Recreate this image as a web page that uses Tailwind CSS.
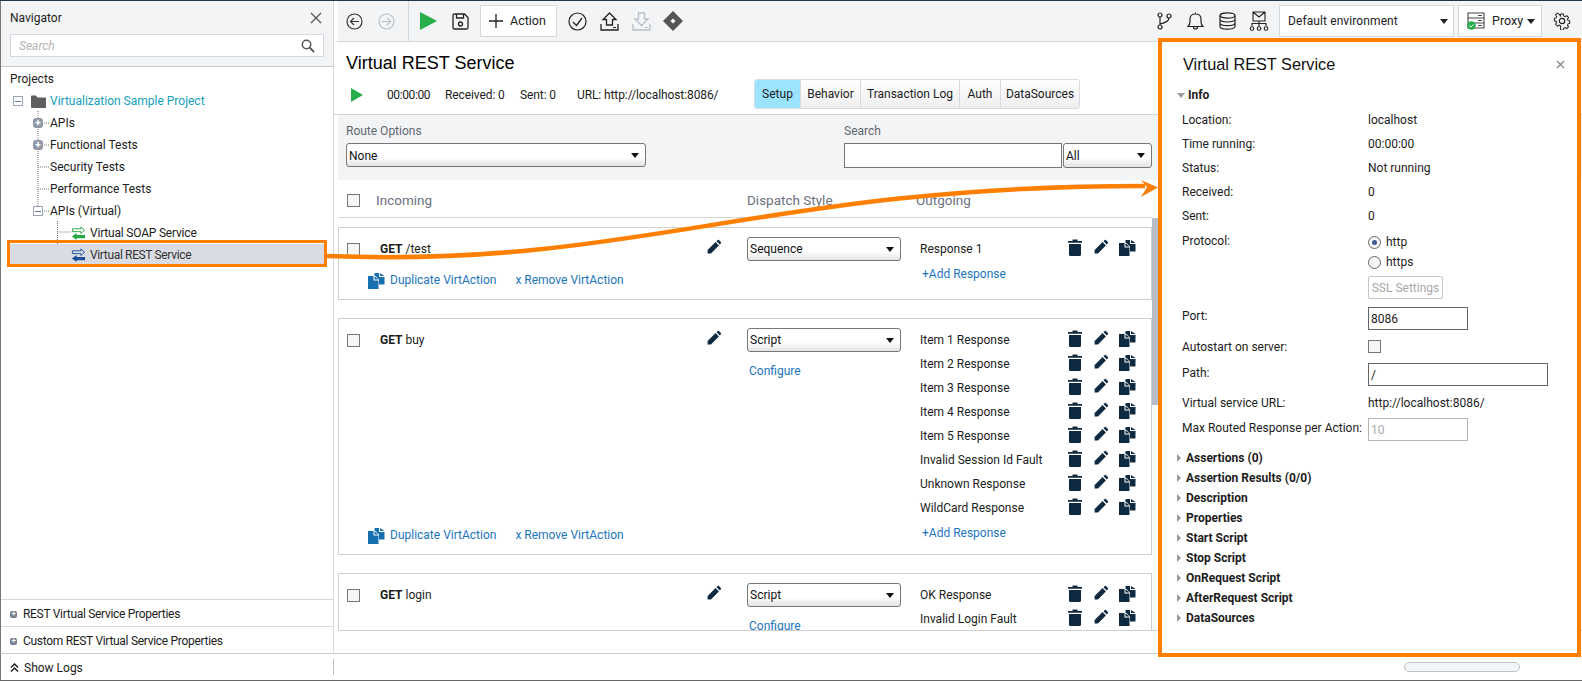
<!DOCTYPE html>
<html>
<head>
  <meta charset="UTF-8">
  <title>Virtual REST Service</title>
  <script src="https://cdn.jsdelivr.net/npm/@tailwindcss/browser@4"></script>
</head>
<body class="bg-white">
<svg class="hidden">
  <symbol id="pencil" viewBox="0 0 20 20"><path fill="currentColor" d="M2 18v-4.200L12 3.900l4.100 4.100L6.200 18z M13.200 2.800 14.600 1.400q.8-.7 1.600 0l2.400 2.400q.7.8 0 1.600L17.200 6.800z"/></symbol>
  <symbol id="trash" viewBox="0 0 14 17"><path fill="currentColor" d="M4.500 .5h5V2H14v1.800H0V2h4.500z M1 5h12v10.500q0 1.500-1.500 1.500h-9Q1 17 1 15.500z"/></symbol>
  <symbol id="copy" viewBox="0 0 17 17"><path fill="currentColor" d="M6.500 1H11v4h5.500v7.500H11V7.500L7.500 4H6.500z M12 1l4.500 3H12z M0 4h5.500v4.500H10.500V17H0z M6.500 4.200l4 3.300h-4z"/></symbol>
  <symbol id="swap" viewBox="0 0 16 16"><path fill="none" stroke="currentColor" stroke-width="1" d="M1.500 3h9V1l4 3.500-4 3.500V6h-9z"/><path fill="currentColor" d="M15 9.500H6V7.500L1 11.200l5 3.800v-2h9z"/></symbol>
</svg>

<div class="relative flex h-[681px] w-[1582px] flex-col overflow-hidden border-t border-b border-t-[#1c3a4b] border-b-[#666] font-['Roboto',sans-serif] text-[12px] text-[#1c1c1c]">
  <div class="flex h-[652px]">

    <!-- navigator -->
    <aside class="flex w-[334px] flex-col border-l border-r border-l-[#777] border-r-[#d5d8dc]">
      <div class="h-[66px] border-b border-[#c4c9d2] bg-[#f3f4f6] px-[9px]">
        <div class="flex h-[33px] items-center justify-between pr-[2px]">
          <span>Navigator</span>
          <svg class="h-[12px] w-[12px] text-[#555]" viewBox="0 0 12 12"><path d="M1 1l10 10M11 1 1 11" stroke="currentColor" stroke-width="1.300"/></svg>
        </div>
        <div class="flex h-[23px] w-[314px] items-center justify-between border border-[#d5d8de] bg-white px-[8px] text-[#b5b5b5] italic">
          <span>Search</span>
          <svg class="h-[14px] w-[14px] text-[#555]" viewBox="0 0 14 14"><circle cx="5.500" cy="5.500" r="4.200" fill="none" stroke="currentColor" stroke-width="1.500"/><path d="M8.700 8.700 13 13" stroke="currentColor" stroke-width="1.800"/></svg>
        </div>
      </div>
      <div class="relative flex-1 pl-[9px]">
        <svg class="absolute top-[-67px] left-[-1px] h-[300px] w-[100px] text-[#777]" viewBox="0 0 100 300">
          <path d="M38 111V210M38 123H50M38 145H50M38 167H50M38 189H50M38 211H50M57.500 221V255H71M57.500 232H71" fill="none" stroke="currentColor" stroke-dasharray="1 1"/>
        </svg>
        <div class="flex h-[23px] items-center">Projects</div>
        <div class="relative flex h-[22px] items-center text-[#12a0b8]">
          <span class="ml-[3px] flex h-[10px] w-[10px] items-center justify-center border border-[#9aa5b8] bg-white"><span class="h-[1px] w-[6px] bg-[#68748a]"></span></span>
          <svg class="ml-[8px] h-[13px] w-[15px] text-[#5f5f5f]" viewBox="0 0 15 13"><path fill="currentColor" d="M0 1.500Q0 .5 1 .5h4l1.500 2H14q1 0 1 1V12q0 1-1 1H1q-1 0-1-1z"/></svg>
          <span class="ml-[4px]">Virtualization Sample Project</span>
        </div>
        <div class="relative flex h-[22px] items-center"><span class="ml-[23px] flex h-[10px] w-[10px] items-center justify-center rounded-[3px] bg-[#8f97a8] text-[10px] leading-none font-bold text-white">+</span><span class="ml-[7px]">APIs</span></div>
        <div class="relative flex h-[22px] items-center"><span class="ml-[23px] flex h-[10px] w-[10px] items-center justify-center rounded-[3px] bg-[#8f97a8] text-[10px] leading-none font-bold text-white">+</span><span class="ml-[7px]">Functional Tests</span></div>
        <div class="relative flex h-[22px] items-center pl-[40px]">Security Tests</div>
        <div class="relative flex h-[22px] items-center pl-[40px]">Performance Tests</div>
        <div class="relative flex h-[22px] items-center"><span class="ml-[23px] flex h-[10px] w-[10px] items-center justify-center border border-[#9aa5b8] bg-white"><span class="h-[1px] w-[6px] bg-[#68748a]"></span></span><span class="ml-[7px]">APIs (Virtual)</span></div>
        <div class="relative flex h-[22px] items-center pl-[61px]">
          <svg class="h-[15px] w-[15px] text-[#27a744]"><use href="#swap"/></svg>
          <span class="ml-[4px] tracking-[-0.2px]">Virtual SOAP Service</span>
        </div>
        <div class="relative flex h-[22px] w-[314px] items-center bg-[#d9dce2] pl-[61px]">
          <svg class="h-[15px] w-[15px] text-[#1d4f9c]"><use href="#swap"/></svg>
          <span class="ml-[4px] tracking-[-0.35px] text-[#333]">Virtual REST Service</span>
        </div>
      </div>
      <div class="flex h-[27px] items-center gap-[6px] border-t border-[#d5d8dc] pt-[2px] pl-[9px] tracking-[-0.3px]">
        <span class="flex h-[7px] w-[7px] items-center justify-center rounded-[2px] bg-[#777f8f] text-[8px] leading-none font-bold text-white">+</span>REST Virtual Service Properties
      </div>
      <div class="flex h-[27px] items-center gap-[6px] border-t border-[#d5d8dc] pt-[2px] pl-[9px] tracking-[-0.3px]">
        <span class="flex h-[7px] w-[7px] items-center justify-center rounded-[2px] bg-[#777f8f] text-[8px] leading-none font-bold text-white">+</span>Custom REST Virtual Service Properties
      </div>
    </aside>

    <!-- main area -->
    <main class="flex flex-1 flex-col">
      <div class="flex h-[41px] items-center border-b border-l-[4px] border-b-[#d5d8dc] border-l-white bg-[#f3f4f6] text-[#222]">
        <div class="flex h-full w-[71px] items-center border-r border-[#d5d8dc] pl-[8px]">
          <svg class="h-[17px] w-[17px] text-[#333]" viewBox="0 0 17 17"><circle cx="8.500" cy="8.500" r="7.500" fill="none" stroke="currentColor" stroke-width="1.200"/><path d="M13 8.500H4.500M8 5 4.500 8.500 8 12" fill="none" stroke="currentColor" stroke-width="1.200"/></svg>
          <svg class="ml-[15px] h-[17px] w-[17px] text-[#b9c0cb]" viewBox="0 0 17 17"><circle cx="8.500" cy="8.500" r="7.500" fill="none" stroke="currentColor" stroke-width="1.200"/><path d="M4 8.500h8.500M9 5l3.500 3.500L9 12" fill="none" stroke="currentColor" stroke-width="1.200"/></svg>
        </div>
        <svg class="ml-[11px] h-[18px] w-[17px] text-[#27ae4a]" viewBox="0 0 17 18"><path fill="currentColor" d="M0 0 17 9 0 18z"/></svg>
        <svg class="ml-[15px] h-[17px] w-[17px]" viewBox="0 0 17 17"><path fill="none" stroke="currentColor" stroke-width="1.300" d="M1 2.500Q1 1 2.500 1h10L16 4.500v10q0 1.500-1.500 1.500h-12Q1 16 1 14.500z M4.500 1v4h7V1"/><circle cx="8.500" cy="11" r="2" fill="none" stroke="currentColor" stroke-width="1.300"/></svg>
        <div class="ml-[11px] flex h-[32px] w-[77px] items-center border border-[#d5d8dc] bg-white pl-[8px]">
          <svg class="h-[14px] w-[14px]" viewBox="0 0 14 14"><path d="M7 0v14M0 7h14" stroke="currentColor" stroke-width="1.300"/></svg>
          <span class="ml-[7px] text-[12.5px]">Action</span>
        </div>
        <svg class="ml-[11px] h-[19px] w-[19px]" viewBox="0 0 19 19"><circle cx="9.500" cy="9.500" r="8.500" fill="none" stroke="currentColor" stroke-width="1.200"/><path d="M5 10l3.500 3.500L14 6" fill="none" stroke="currentColor" stroke-width="1.300"/></svg>
        <svg class="ml-[13px] h-[19px] w-[19px]" viewBox="0 0 19 19"><path fill="none" stroke="currentColor" stroke-width="1.300" d="M9.500 1 16 7.500h-3.500V13h-6V7.500H3z M1 12v6h17v-6"/><path d="M13 15.500h3" stroke="currentColor"/></svg>
        <svg class="ml-[13px] h-[19px] w-[19px] text-[#b9c0cb]" viewBox="0 0 19 19"><path fill="none" stroke="currentColor" stroke-width="1.300" d="M6.500 1h6v6H16l-6.500 6.500L3 7h3.500z M1 12v6h17v-6"/><path d="M13 15.500h3" stroke="currentColor"/></svg>
        <svg class="ml-[12px] h-[20px] w-[20px] text-[#555]" viewBox="0 0 20 20"><path fill="currentColor" d="M10 0 20 10 10 20 0 10z"/><path fill="#fff" d="M10 7.500 12.500 10 10 12.500 7.500 10z"/></svg>

        <svg class="ml-[474px] h-[18px] w-[15px]" viewBox="0 0 15 18"><g fill="none" stroke="currentColor" stroke-width="1.200"><circle cx="3" cy="3" r="2"/><circle cx="3" cy="15" r="2"/><circle cx="12" cy="4" r="2"/><path d="M3 5v8M12 6q0 4-9 6"/></g></svg>
        <svg class="ml-[15px] h-[18px] w-[17px]" viewBox="0 0 17 18"><path fill="none" stroke="currentColor" stroke-width="1.200" d="M1 14.500q2-1.500 2-5V7q0-5 5.500-5T14 7v2.500q0 3.500 2 5z M6.500 15q0 2 2 2t2-2M8.500 2V.5"/></svg>
        <svg class="ml-[15px] h-[18px] w-[17px]" viewBox="0 0 17 18"><g fill="none" stroke="currentColor" stroke-width="1.200"><ellipse cx="8.500" cy="3.500" rx="7.500" ry="2.700"/><path d="M1 3.500v11c0 1.500 3.400 2.700 7.500 2.700s7.500-1.200 7.500-2.700v-11M1 7.300c0 1.500 3.400 2.700 7.500 2.700S16 8.800 16 7.300M1 11c0 1.500 3.400 2.700 7.500 2.700S16 12.500 16 11"/></g></svg>
        <svg class="ml-[13px] h-[20px] w-[20px]" viewBox="0 0 20 20"><g fill="none" stroke="currentColor" stroke-width="1.100"><path d="M4 1h12v9H4z M4 1l6 5 6-5M10 10v5M3 15v-2.500h14V15"/><circle cx="3" cy="17.500" r="1.800"/><circle cx="10" cy="17.500" r="1.800"/><circle cx="17" cy="17.500" r="1.800"/></g></svg>

        <div class="ml-[10px] flex h-[32px] w-[175px] items-center justify-between border border-[#d5d8dc] bg-white pr-[5px] pl-[8px] tracking-[0.1px]">
          <span>Default environment</span>
          <span class="h-0 w-0 border-x-[4px] border-t-[5px] border-x-transparent border-t-[#222]"></span>
        </div>
        <div class="ml-[4px] flex h-[32px] w-[84px] items-center border border-[#d5d8dc] bg-white pl-[8px] text-[12.5px]">
          <svg class="h-[18px] w-[18px]" viewBox="0 0 18 18"><g fill="none" stroke="#444" stroke-width="1.100"><path d="M1 1h16v5H1zM1 6h16v5H1zM1 11h16v5H1z"/><path d="M11 3.500h4M11 8.500h4M11 13.500h4"/></g><circle cx="4.500" cy="13.500" r="4.200" fill="#27ae4a"/><path d="M2.500 13.500l1.500 1.500 2.500-2.500" fill="none" stroke="#fff"/></svg>
          <span class="ml-[7px]">Proxy</span>
          <span class="ml-[4px] h-0 w-0 border-x-[4px] border-t-[5px] border-x-transparent border-t-[#222]"></span>
        </div>
        <svg class="ml-[11px] h-[18px] w-[18px]" viewBox="0 0 18 18"><g fill="none" stroke="currentColor" stroke-width="1.200"><path d="M7.500 1h3l.5 2.300 1.600.7 2-1.200 2 2.200-1.200 2 .6 1.500 2 .5v3l-2 .5-.6 1.500 1.200 2-2 2.200-2-1.200-1.600.7-.5 2.300h-3L7 14.700l-1.600-.7-2 1.200-2-2.200 1.200-2-.6-1.500-2-.5v-3l2-.5.6-1.500-1.200-2 2-2.200 2 1.200L7 3.300z" transform="translate(1.400 1.200) scale(.85)"/><circle cx="9" cy="9" r="2.700"/></g></svg>
      </div>

      <!-- service header -->
      <div class="h-[73px] border-b border-[#d5d5d5] pl-[12px]">
        <div class="flex h-[37px] items-center pt-[5px] font-['Liberation_Sans',sans-serif] text-[18px] text-black">Virtual REST Service</div>
        <div class="flex h-[32px] items-center">
          <svg class="ml-[5px] h-[14px] w-[12px] text-[#27ae4a]" viewBox="0 0 12 14"><path fill="currentColor" d="M0 0 12 7 0 14z"/></svg>
          <span class="ml-[24px] w-[58px] tracking-[-0.4px]">00:00:00</span>
          <span class="w-[75px] tracking-[-0.1px]">Received: 0</span>
          <span class="w-[57px] tracking-[-0.1px]">Sent: 0</span>
          <span class="w-[177px] tracking-[-0.1px]">URL: http://localhost:8086/</span>
          <div class="flex h-[30px] self-start overflow-hidden rounded-[3px] border border-[#d8dadd] bg-linear-to-b from-white to-[#eeeeee]">
            <span class="flex w-[46px] items-center justify-center border-r border-[#d8dadd] bg-[#9be3ff]">Setup</span>
            <span class="flex w-[60px] items-center justify-center border-r border-[#d8dadd]">Behavior</span>
            <span class="flex w-[99px] items-center justify-center border-r border-[#d8dadd]">Transaction Log</span>
            <span class="flex w-[41px] items-center justify-center border-r border-[#d8dadd]">Auth</span>
            <span class="flex w-[78px] items-center justify-center">DataSources</span>
          </div>
        </div>
      </div>

      <!-- filters -->
      <div class="flex h-[65px] border-l-[4px] border-white bg-[#f3f4f6] pl-[8px] text-[#5f6670]">
        <div class="w-[498px] pt-[7px]">
          <div class="h-[21px]">Route Options</div>
          <div class="flex h-[24px] w-[300px] items-center justify-between rounded-[3px] border border-[#777] bg-linear-to-b from-white from-60% to-[#e3e3e3] pt-[1px] pr-[6px] pl-[2px] text-[#111]">
            <span>None</span><span class="h-0 w-0 border-x-[4px] border-t-[5px] border-x-transparent border-t-[#111]"></span>
          </div>
        </div>
        <div class="pt-[7px]">
          <div class="h-[21px]">Search</div>
          <div class="flex">
            <div class="h-[25px] w-[218px] border border-[#777] bg-white"></div>
            <div class="ml-[1px] flex h-[25px] w-[89px] items-center justify-between rounded-[3px] border border-[#777] bg-linear-to-b from-white from-60% to-[#e3e3e3] pr-[6px] pl-[2px] text-[#111]">
              <span>All</span><span class="h-0 w-0 border-x-[4px] border-t-[5px] border-x-transparent border-t-[#111]"></span>
            </div>
          </div>
        </div>
      </div>

      <!-- list header -->
      <div class="ml-[4px] flex h-[38px] w-[814px] items-center border-b border-[#d5d5d5] pt-[3px] pl-[9px] text-[13.5px] text-[#6b7280]">
        <span class="h-[13px] w-[13px] border border-[#777] bg-[#f6f6f6]"></span>
        <span class="ml-[16px] w-[371px]">Incoming</span>
        <span class="w-[169px]">Dispatch Style</span>
        <span>Outgoing</span>
      </div>

      <!-- actions list -->
      <div class="ml-[4px] flex h-[413px] overflow-hidden border-b border-[#d0d0d0]">
        <div class="flex w-[814px] flex-col gap-[18px] pt-[9px]">

          <div class="flex h-[73px] w-[814px] shrink-0 border border-[#cfcfcf]">
            <div class="flex w-[408px] flex-col justify-between pt-[12px] pr-[25px] pb-[10px] pl-[8px]">
              <div class="flex items-center"><span class="h-[13px] w-[13px] border border-[#777] bg-[#f6f6f6]"></span><span class="ml-[20px] flex-1"><b>GET</b> /test</span><svg class="-mt-[4px] h-[16px] w-[16px] text-[#0f2a40]"><use href="#pencil"/></svg></div>
              <div class="flex items-center pl-[21px] text-[#1c75bc]"><svg class="h-[17px] w-[17px] text-[#1670b0]"><use href="#copy"/></svg><span class="ml-[5px]">Duplicate VirtAction</span><span class="ml-[19px]">x Remove VirtAction</span></div>
            </div>
            <div class="w-[173px] pt-[9px]">
              <div class="flex h-[24px] w-[154px] items-center justify-between rounded-[3px] border border-[#777] bg-linear-to-b from-white from-60% to-[#e3e3e3] pr-[6px] pl-[2px] text-[#111]"><span>Sequence</span><span class="h-0 w-0 border-x-[4px] border-t-[5px] border-x-transparent border-t-[#111]"></span></div>
            </div>
            <div class="pt-[9px]">
              <div class="flex h-[24px] items-center"><span class="w-[148px]">Response 1</span><svg class="-mt-[4px] h-[17px] w-[14px] text-[#0f2a40]"><use href="#trash"/></svg><svg class="-mt-[4px] ml-[11px] h-[16px] w-[16px] text-[#0f2a40]"><use href="#pencil"/></svg><svg class="-mt-[4px] ml-[10px] h-[17px] w-[17px] text-[#0f2a40]"><use href="#copy"/></svg></div>
              <div class="mt-[1px] flex h-[24px] items-center pl-[2px] text-[#1c75bc]">+Add Response</div>
            </div>
          </div>

          <div class="flex h-[237px] w-[814px] shrink-0 border border-[#cfcfcf]">
            <div class="flex w-[408px] flex-col justify-between pt-[12px] pr-[25px] pb-[10px] pl-[8px]">
              <div class="flex items-center"><span class="h-[13px] w-[13px] border border-[#777] bg-[#f6f6f6]"></span><span class="ml-[20px] flex-1"><b>GET</b> buy</span><svg class="-mt-[4px] h-[16px] w-[16px] text-[#0f2a40]"><use href="#pencil"/></svg></div>
              <div class="flex items-center pl-[21px] text-[#1c75bc]"><svg class="h-[17px] w-[17px] text-[#1670b0]"><use href="#copy"/></svg><span class="ml-[5px]">Duplicate VirtAction</span><span class="ml-[19px]">x Remove VirtAction</span></div>
            </div>
            <div class="w-[173px] pt-[9px]">
              <div class="flex h-[24px] w-[154px] items-center justify-between rounded-[3px] border border-[#777] bg-linear-to-b from-white from-60% to-[#e3e3e3] pr-[6px] pl-[2px] text-[#111]"><span>Script</span><span class="h-0 w-0 border-x-[4px] border-t-[5px] border-x-transparent border-t-[#111]"></span></div>
              <div class="mt-[10px] pl-[2px] text-[#1c75bc]">Configure</div>
            </div>
            <div class="pt-[9px]">
              <div class="flex h-[24px] items-center"><span class="w-[148px]">Item 1 Response</span><svg class="-mt-[4px] h-[17px] w-[14px] text-[#0f2a40]"><use href="#trash"/></svg><svg class="-mt-[4px] ml-[11px] h-[16px] w-[16px] text-[#0f2a40]"><use href="#pencil"/></svg><svg class="-mt-[4px] ml-[10px] h-[17px] w-[17px] text-[#0f2a40]"><use href="#copy"/></svg></div>
              <div class="flex h-[24px] items-center"><span class="w-[148px]">Item 2 Response</span><svg class="-mt-[4px] h-[17px] w-[14px] text-[#0f2a40]"><use href="#trash"/></svg><svg class="-mt-[4px] ml-[11px] h-[16px] w-[16px] text-[#0f2a40]"><use href="#pencil"/></svg><svg class="-mt-[4px] ml-[10px] h-[17px] w-[17px] text-[#0f2a40]"><use href="#copy"/></svg></div>
              <div class="flex h-[24px] items-center"><span class="w-[148px]">Item 3 Response</span><svg class="-mt-[4px] h-[17px] w-[14px] text-[#0f2a40]"><use href="#trash"/></svg><svg class="-mt-[4px] ml-[11px] h-[16px] w-[16px] text-[#0f2a40]"><use href="#pencil"/></svg><svg class="-mt-[4px] ml-[10px] h-[17px] w-[17px] text-[#0f2a40]"><use href="#copy"/></svg></div>
              <div class="flex h-[24px] items-center"><span class="w-[148px]">Item 4 Response</span><svg class="-mt-[4px] h-[17px] w-[14px] text-[#0f2a40]"><use href="#trash"/></svg><svg class="-mt-[4px] ml-[11px] h-[16px] w-[16px] text-[#0f2a40]"><use href="#pencil"/></svg><svg class="-mt-[4px] ml-[10px] h-[17px] w-[17px] text-[#0f2a40]"><use href="#copy"/></svg></div>
              <div class="flex h-[24px] items-center"><span class="w-[148px]">Item 5 Response</span><svg class="-mt-[4px] h-[17px] w-[14px] text-[#0f2a40]"><use href="#trash"/></svg><svg class="-mt-[4px] ml-[11px] h-[16px] w-[16px] text-[#0f2a40]"><use href="#pencil"/></svg><svg class="-mt-[4px] ml-[10px] h-[17px] w-[17px] text-[#0f2a40]"><use href="#copy"/></svg></div>
              <div class="flex h-[24px] items-center"><span class="w-[148px]">Invalid Session Id Fault</span><svg class="-mt-[4px] h-[17px] w-[14px] text-[#0f2a40]"><use href="#trash"/></svg><svg class="-mt-[4px] ml-[11px] h-[16px] w-[16px] text-[#0f2a40]"><use href="#pencil"/></svg><svg class="-mt-[4px] ml-[10px] h-[17px] w-[17px] text-[#0f2a40]"><use href="#copy"/></svg></div>
              <div class="flex h-[24px] items-center"><span class="w-[148px]">Unknown Response</span><svg class="-mt-[4px] h-[17px] w-[14px] text-[#0f2a40]"><use href="#trash"/></svg><svg class="-mt-[4px] ml-[11px] h-[16px] w-[16px] text-[#0f2a40]"><use href="#pencil"/></svg><svg class="-mt-[4px] ml-[10px] h-[17px] w-[17px] text-[#0f2a40]"><use href="#copy"/></svg></div>
              <div class="flex h-[24px] items-center"><span class="w-[148px]">WildCard Response</span><svg class="-mt-[4px] h-[17px] w-[14px] text-[#0f2a40]"><use href="#trash"/></svg><svg class="-mt-[4px] ml-[11px] h-[16px] w-[16px] text-[#0f2a40]"><use href="#pencil"/></svg><svg class="-mt-[4px] ml-[10px] h-[17px] w-[17px] text-[#0f2a40]"><use href="#copy"/></svg></div>
              <div class="mt-[1px] flex h-[24px] items-center pl-[2px] text-[#1c75bc]">+Add Response</div>
            </div>
          </div>

          <div class="flex h-[120px] w-[814px] shrink-0 border border-[#cfcfcf]">
            <div class="w-[408px] pt-[12px] pr-[25px] pl-[8px]">
              <div class="flex items-center"><span class="h-[13px] w-[13px] border border-[#777] bg-[#f6f6f6]"></span><span class="ml-[20px] flex-1"><b>GET</b> login</span><svg class="-mt-[4px] h-[16px] w-[16px] text-[#0f2a40]"><use href="#pencil"/></svg></div>
            </div>
            <div class="w-[173px] pt-[9px]">
              <div class="flex h-[24px] w-[154px] items-center justify-between rounded-[3px] border border-[#777] bg-linear-to-b from-white from-60% to-[#e3e3e3] pr-[6px] pl-[2px] text-[#111]"><span>Script</span><span class="h-0 w-0 border-x-[4px] border-t-[5px] border-x-transparent border-t-[#111]"></span></div>
              <div class="mt-[10px] pl-[2px] text-[#1c75bc]">Configure</div>
            </div>
            <div class="pt-[9px]">
              <div class="flex h-[24px] items-center"><span class="w-[148px]">OK Response</span><svg class="-mt-[4px] h-[17px] w-[14px] text-[#0f2a40]"><use href="#trash"/></svg><svg class="-mt-[4px] ml-[11px] h-[16px] w-[16px] text-[#0f2a40]"><use href="#pencil"/></svg><svg class="-mt-[4px] ml-[10px] h-[17px] w-[17px] text-[#0f2a40]"><use href="#copy"/></svg></div>
              <div class="flex h-[24px] items-center"><span class="w-[148px]">Invalid Login Fault</span><svg class="-mt-[4px] h-[17px] w-[14px] text-[#0f2a40]"><use href="#trash"/></svg><svg class="-mt-[4px] ml-[11px] h-[16px] w-[16px] text-[#0f2a40]"><use href="#pencil"/></svg><svg class="-mt-[4px] ml-[10px] h-[17px] w-[17px] text-[#0f2a40]"><use href="#copy"/></svg></div>
            </div>
          </div>
        </div>
        <div class="h-[187px] w-[8px] bg-[#b5bdc9]"></div>
      </div>
    </main>
  </div>

  <!-- bottom bar -->
  <div class="flex h-[27px] items-center border-t border-l border-t-[#c9ccd2] border-l-[#777]">
    <div class="flex h-[16px] w-[333px] items-center gap-[5px] border-r border-[#c0c0c0] pl-[9px]">
      <svg class="h-[9px] w-[9px]" viewBox="0 0 9 9"><path d="M1 4.500 4.500 1 8 4.500M1 8.500 4.500 5 8 8.500" fill="none" stroke="#222" stroke-width="1.500"/></svg>
      <span class="pt-[2px]">Show Logs</span>
    </div>
    <div class="ml-[1070px] h-[10px] w-[116px] rounded-full border border-[#c0c4ca] bg-[#f3f4f6]"></div>
  </div>

  <!-- details panel, sits over the list -->
  <section class="absolute top-[37px] left-[1158px] h-[619px] w-[423px] border-[4px] border-[#ff7f00] bg-white pl-[20px]">
    <div class="flex h-[43px] items-center justify-between pt-[2px] pr-[12px] pl-[1px] font-['Liberation_Sans',sans-serif] text-[16.3px] text-[#111]">
      <span>Virtual REST Service</span>
      <svg class="h-[9px] w-[9px] text-[#888]" viewBox="0 0 9 9"><path d="M1 1l7 7M8 1 1 8" stroke="currentColor" stroke-width="1.300"/></svg>
    </div>
    <div class="mb-[3px] -ml-[5px] flex h-[20px] items-center font-bold"><span class="mr-[3px] h-0 w-0 border-x-[4px] border-t-[5px] border-x-transparent border-t-[#999]"></span>Info</div>
    <div class="flex h-[24px] items-center"><span class="w-[186px]">Location:</span>localhost</div>
    <div class="flex h-[24px] items-center"><span class="w-[186px]">Time running:</span>00:00:00</div>
    <div class="flex h-[24px] items-center"><span class="w-[186px]">Status:</span>Not running</div>
    <div class="flex h-[24px] items-center"><span class="w-[186px]">Received:</span>0</div>
    <div class="flex h-[24px] items-center"><span class="w-[186px]">Sent:</span>0</div>
    <div class="flex h-[75px]">
      <span class="w-[186px] pt-[4px]">Protocol:</span>
      <div class="pt-[4px]">
        <div class="flex h-[20px] items-center gap-[5px]"><span class="flex h-[13px] w-[13px] items-center justify-center rounded-full border border-[#666] bg-[#f5f5f5]"><span class="h-[5px] w-[5px] rounded-full bg-[#3d5a98]"></span></span>http</div>
        <div class="flex h-[20px] items-center gap-[5px]"><span class="h-[13px] w-[13px] rounded-full border border-[#666] bg-[#f5f5f5]"></span>https</div>
        <div class="mt-[4px] flex h-[23px] w-[75px] items-center justify-center rounded-[2px] border border-[#c4c4c4] text-[#a8a8a8]">SSL Settings</div>
      </div>
    </div>
    <div class="flex h-[30px]">
      <span class="w-[186px] pt-[4px]">Port:</span>
      <div class="mt-[4px] flex h-[23px] w-[100px] items-center border border-[#666] pl-[2px]">8086</div>
    </div>
    <div class="flex h-[26px] items-center pt-[1px]"><span class="w-[186px]">Autostart on server:</span><span class="h-[13px] w-[13px] border border-[#777] bg-[#f6f6f6]"></span></div>
    <div class="flex h-[30px]">
      <span class="w-[186px] pt-[5px]">Path:</span>
      <div class="mt-[4px] flex h-[23px] w-[180px] items-center border border-[#666] pl-[2px]">/</div>
    </div>
    <div class="flex h-[26px] items-center pt-[2px]"><span class="w-[186px]">Virtual service URL:</span>http://localhost:8086/</div>
    <div class="flex h-[30px]">
      <span class="w-[186px] pt-[4px]">Max Routed Response per Action:</span>
      <div class="mt-[3px] flex h-[23px] w-[100px] items-center border border-[#b5b5b5] pl-[2px] text-[#aaa]">10</div>
    </div>
    <div class="mt-[3px] -ml-[5px] font-bold">
      <div class="flex h-[20px] items-center"><span class="mr-[5px] h-0 w-0 border-y-[4px] border-l-[4px] border-y-transparent border-l-[#999]"></span>Assertions (0)</div>
      <div class="flex h-[20px] items-center"><span class="mr-[5px] h-0 w-0 border-y-[4px] border-l-[4px] border-y-transparent border-l-[#999]"></span>Assertion Results (0/0)</div>
      <div class="flex h-[20px] items-center"><span class="mr-[5px] h-0 w-0 border-y-[4px] border-l-[4px] border-y-transparent border-l-[#999]"></span>Description</div>
      <div class="flex h-[20px] items-center"><span class="mr-[5px] h-0 w-0 border-y-[4px] border-l-[4px] border-y-transparent border-l-[#999]"></span>Properties</div>
      <div class="flex h-[20px] items-center"><span class="mr-[5px] h-0 w-0 border-y-[4px] border-l-[4px] border-y-transparent border-l-[#999]"></span>Start Script</div>
      <div class="flex h-[20px] items-center"><span class="mr-[5px] h-0 w-0 border-y-[4px] border-l-[4px] border-y-transparent border-l-[#999]"></span>Stop Script</div>
      <div class="flex h-[20px] items-center"><span class="mr-[5px] h-0 w-0 border-y-[4px] border-l-[4px] border-y-transparent border-l-[#999]"></span>OnRequest Script</div>
      <div class="flex h-[20px] items-center"><span class="mr-[5px] h-0 w-0 border-y-[4px] border-l-[4px] border-y-transparent border-l-[#999]"></span>AfterRequest Script</div>
      <div class="flex h-[20px] items-center"><span class="mr-[5px] h-0 w-0 border-y-[4px] border-l-[4px] border-y-transparent border-l-[#999]"></span>DataSources</div>
    </div>
  </section>

  <!-- annotation: highlight and arrow -->
  <div class="pointer-events-none absolute top-[239px] left-[7px] h-[27px] w-[320px] border-[3px] border-[#ff7f00]"></div>
  <svg class="pointer-events-none absolute top-[-1px] left-0 h-[681px] w-[1582px]" viewBox="0 0 1582 681">
    <path d="M326 256C640 268 760 186 1145 186" fill="none" stroke="#ff7f00" stroke-width="4.500"/>
    <path d="M1158 187.500 1141 180 1147 187 1141 197z" fill="#ff7f00"/>
  </svg>
</div>
</body>
</html>
